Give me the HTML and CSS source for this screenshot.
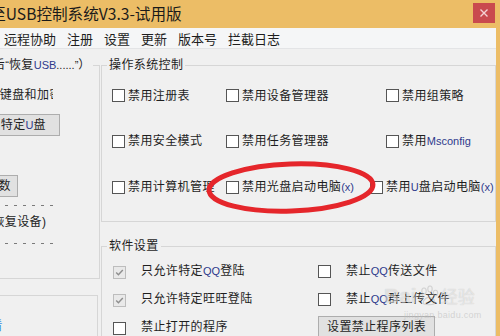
FILE: index.html
```html
<!DOCTYPE html>
<html lang="zh-CN">
<head>
<meta charset="utf-8">
<title>USB控制系统</title>
<link rel="stylesheet" href="styles.css">
</head>
<body>
<div class="window">
  <div class="titlebar">
    <div class="title">大势至USB控制系统V3.3-试用版</div>
    <div class="close">
      <svg width="10" height="10" viewBox="0 0 10 10"><path d="M1.5 1.5L8.5 8.5M8.5 1.5L1.5 8.5" stroke="#f4d2d3" stroke-width="1.4" fill="none"/></svg>
    </div>
  </div>
  <div class="client">
    <div class="menubar">
      <span>远程协助</span><span>注册</span><span>设置</span><span>更新</span><span>版本号</span><span>拦截日志</span>
    </div>
    <div class="main">
      <div class="left">
        <div class="left-inner">
          <fieldset class="gb gb-left">
            <legend>点击后<span class="q">“</span>恢复<span class="en">USB</span><span class="q">......”</span>）</legend>
            <div class="left-body">
              <div class="kb">禁用键盘和加密狗</div>
              <button class="btn btn-u">添加特定<span class="en">U</span>盘</button>
              <button class="btn btn-p">参数</button>
              <div class="dash dash1"></div>
              <div class="restore">(恢复设备)</div>
              <div class="dash dash2"></div>
            </div>
          </fieldset>
          <div class="left-box2"><span class="link">查看</span></div>
        </div>
      </div>
      <div class="right">
        <fieldset class="gb gb-os">
          <legend>操作系统控制</legend>
          <div class="os-grid">
            <div class="item"><span class="cb"></span><span class="lbl">禁用注册表</span></div>
            <div class="item"><span class="cb"></span><span class="lbl">禁用设备管理器</span></div>
            <div class="item"><span class="cb"></span><span class="lbl">禁用组策略</span></div>
            <div class="item"><span class="cb"></span><span class="lbl">禁用安全模式</span></div>
            <div class="item"><span class="cb"></span><span class="lbl">禁用任务管理器</span></div>
            <div class="item"><span class="cb"></span><span class="lbl">禁用<span class="en">Msconfig</span></span></div>
            <div class="item w-c1"><span class="cb"></span><span class="lbl">禁用计算机管理</span></div>
            <div class="item w-c2"><span class="cb"></span><span class="lbl">禁用光盘启动电脑<span class="en">(x)</span></span></div>
            <div class="item shift-c3"><span class="cb"></span><span class="lbl">禁用<span class="en">U</span>盘启动电脑<span class="en">(x)</span></span></div>
          </div>
        </fieldset>
        <fieldset class="gb gb-soft">
          <legend>软件设置</legend>
          <div class="soft-grid">
            <div class="item soft"><span class="cb checked low"><svg width="11" height="11" viewBox="0 0 11 11"><path d="M2.2 5.6L4.4 7.8L8.8 3" stroke="#8e8e8e" stroke-width="1.4" fill="none"/></svg></span><span class="lbl">只允许特定<span class="en">QQ</span>登陆</span></div>
            <div class="item soft"><span class="cb"></span><span class="lbl">禁止<span class="en">QQ</span>传送文件</span></div>
            <div class="item soft"><span class="cb checked low"><svg width="11" height="11" viewBox="0 0 11 11"><path d="M2.2 5.6L4.4 7.8L8.8 3" stroke="#8e8e8e" stroke-width="1.4" fill="none"/></svg></span><span class="lbl">只允许特定旺旺登陆</span></div>
            <div class="item soft"><span class="cb"></span><span class="lbl">禁止<span class="en">QQ</span>群上传文件</span></div>
            <div class="item soft"><span class="cb low"></span><span class="lbl">禁止打开的程序</span></div>
            <div class="item"><button class="btn btn-list">设置禁止程序列表</button></div>
          </div>
        </fieldset>
      </div>
    </div>
  </div>
</div>
<svg class="mark" width="500" height="336" viewBox="0 0 500 336">
  <ellipse cx="291" cy="187.5" rx="82" ry="23.5" transform="rotate(-2 291 187.5)" fill="none" stroke="#e5262b" stroke-width="5"/>
</svg>
<div class="watermark">
  <div class="wm-top">
    <span class="wm-bai">Bai</span>
    <svg class="wm-paw" width="22" height="22" viewBox="0 0 22 22">
      <g fill="none" stroke="rgba(170,170,170,0.45)" stroke-width="1.1">
        <ellipse cx="6" cy="6" rx="2.2" ry="3"/><ellipse cx="12" cy="4" rx="2.2" ry="3"/>
        <ellipse cx="17.5" cy="8" rx="2.2" ry="2.8"/><ellipse cx="3" cy="12" rx="2" ry="2.6"/>
        <path d="M6 19c-2-1 0-6 5-7c4 0 7 4 5 7c-2 1-8 1-10 0z"/>
      </g>
    </svg>
    <span class="wm-jy">经验</span>
  </div>
  <div class="wm-url">jingyan.baidu.com</div>
</div>
</body>
</html>
```
FILE: styles.css
```css
* { box-sizing: border-box; }
html, body { margin: 0; padding: 0; }
body {
  width: 500px;
  height: 336px;
  overflow: hidden;
  position: relative;
  background: #ecbd66;
  font-family: "Liberation Sans", "Noto Sans CJK SC", sans-serif;
  font-size: 12px;
  color: #1e1e1e;
}
.window {
  height: 336px;
  display: flex;
  flex-direction: column;
  background: #ecbd66;
  overflow: hidden;
}
.titlebar {
  height: 28px;
  flex-shrink: 0;
  display: flex;
  overflow: hidden;
}
.title {
  margin-left: -41px;
  font-family: "Noto Sans CJK SC", sans-serif;
  font-size: 15.6px;
  line-height: 26px;
  color: #1a1a1a;
  white-space: nowrap;
}
.close {
  margin: 3px 5px 0 auto;
  width: 22px;
  height: 20px;
  background: #c94a4e;
  display: flex;
  align-items: center;
  justify-content: center;
}
.client {
  flex: 1;
  min-height: 0;
  margin-right: 4px;
  background: #f0f0f0;
  display: flex;
  flex-direction: column;
  overflow: hidden;
}
.menubar {
  height: 21px;
  flex-shrink: 0;
  padding: 1px 0 0 4px;
  background: #f5f6f7;
  border-bottom: 1px solid #e3e4e6;
  display: flex;
  gap: 11px;
  font-family: "Noto Sans CJK SC", sans-serif;
  font-size: 13px;
  line-height: 19px;
  color: #1e1e1e;
}
.main {
  flex: 1;
  min-height: 0;
  display: flex;
  align-items: flex-start;
  padding-top: 8px;
  overflow: hidden;
}
fieldset.gb {
  margin: 0;
  padding: 0;
  min-width: 0;
  border: 1px solid #d6d6d6;
}
fieldset.gb > legend {
  margin-left: 5px;
  padding: 0 2px;
  line-height: 16px;
  letter-spacing: 0.4px;
  white-space: nowrap;
}
.en {
  font-family: "Liberation Sans", sans-serif;
  font-size: 11px;
  letter-spacing: 0;
  color: #2e3a8c;
}
.q {
  font-family: "Liberation Sans", sans-serif;
  font-size: 11px;
  letter-spacing: 0;
}

/* left (clipped) column */
.left {
  width: 100px;
  flex-shrink: 0;
  overflow: hidden;
}
.left-inner {
  margin-left: -40px;
  width: 140px;
}
fieldset.gb-left { padding-bottom: 34px; }
.left-body {
  display: flex;
  flex-direction: column;
  align-items: flex-start;
}
.kb {
  margin: 14px 0 0 14px;
  width: 78px;
  overflow: hidden;
  white-space: nowrap;
  line-height: 16px;
  letter-spacing: 0.4px;
}
.btn {
  height: 22px;
  margin: 0;
  border: 1px solid #adadad;
  background: #e1e1e1;
  font-family: "Liberation Sans", "Noto Sans CJK SC", sans-serif;
  font-size: 12px;
  letter-spacing: 0.4px;
  line-height: 20px;
  color: #1e1e1e;
  white-space: nowrap;
  padding: 0 13px;
}
.btn-u { margin: 11px 0 0 1px; }
.btn-p { margin: 39px 0 0 18px; padding: 0 6px; }
.dash {
  flex-shrink: 0;
  width: 93px;
  height: 1px;
  background-image: repeating-linear-gradient(90deg, #7a7a7a 0, #7a7a7a 3px, transparent 3px, transparent 9px);
  background-position: 8px 0;
}
.dash1 { margin-top: 8px; }
.dash2 { margin-top: 13px; }
.restore {
  margin: 8px 0 0 27px;
  line-height: 16px;
  letter-spacing: 0.4px;
  white-space: nowrap;
}
.left-box2 {
  margin-top: 16px;
  width: 138px;
  height: 41px;
  border: 1px solid #d6d6d6;
  border-bottom: 0;
  padding-top: 22px;
  line-height: 16px;
}
.link {
  margin-left: 17px;
  color: #3b8fe3;
  letter-spacing: 0.4px;
}

/* right column */
.right {
  flex: 1;
  min-width: 0;
  margin-left: 1px;
  display: flex;
  flex-direction: column;
}
.os-grid {
  display: grid;
  grid-template-columns: 114px 160px 1fr;
  grid-template-rows: 45px 46px 46px;
  padding: 0 0 11px 10px;
}
.item {
  display: flex;
  align-items: center;
  gap: 3px;
  min-width: 0;
  overflow: hidden;
  white-space: nowrap;
  letter-spacing: 0.4px;
}
.lbl {
  white-space: nowrap;
  line-height: 16px;
}
.w-c1 { width: 106px; }
.w-c2 { width: 129px; }
.shift-c3 { margin-left: -16px; }
.cb {
  width: 13px;
  height: 13px;
  flex-shrink: 0;
  border: 1px solid #555;
  background: #fff;
  display: flex;
  align-items: center;
  justify-content: center;
}
.cb.checked {
  background: #e9e9e9;
  border-color: #bdbdbd;
}
.cb.low { margin-top: 3px; }
fieldset.gb-soft {
  margin-top: 16px;
  height: 98px;
  border-bottom: 0;
}
.soft-grid {
  display: grid;
  grid-template-columns: 205px 1fr;
  grid-auto-rows: 28px;
  padding: 3px 0 0 11px;
}
.soft { gap: 15px; }
.btn-list { padding: 0 8px; }

/* overlays */
.mark {
  position: absolute;
  left: 0;
  top: 0;
  pointer-events: none;
}
.watermark {
  position: absolute;
  left: 384px;
  top: 283px;
  pointer-events: none;
}
.wm-top {
  display: flex;
  align-items: center;
  gap: 1px;
}
.wm-bai {
  font-family: "Liberation Sans", sans-serif;
  font-weight: bold;
  font-size: 21px;
  color: rgba(255, 255, 255, 0.5);
  text-shadow: 0 0 1px rgba(0, 0, 0, 0.2);
}
.wm-jy {
  font-family: "Noto Sans CJK SC", sans-serif;
  font-size: 17px;
  color: rgba(255, 255, 255, 0.5);
  text-shadow: 0 0 1px rgba(0, 0, 0, 0.2);
}
.wm-url {
  margin: 2px 0 0 20px;
  font-family: "Liberation Sans", sans-serif;
  font-size: 9px;
  color: rgba(190, 190, 190, 0.6);
  letter-spacing: 0.3px;
}
```
